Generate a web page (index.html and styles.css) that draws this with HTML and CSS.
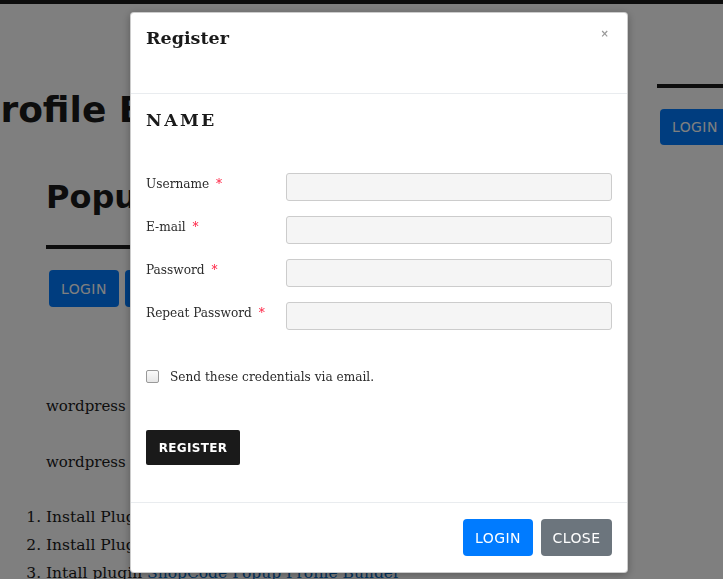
FILE: index.html
```html
<!DOCTYPE html>
<html>
<head>
<meta charset="utf-8">
<link rel="stylesheet" href="styles.css">
</head>
<body>
<div class="topbar"></div>
<div class="page">
  <main class="main">
    <h1 class="page-title">Profile Builder Popup</h1>
    <h2 class="post-title">Popup Profile Builder</h2>
    <div class="rule"></div>
    <div class="btns">
      <button class="bg-btn">LOGIN</button>
      <button class="bg-btn">REGISTER</button>
    </div>
    <p class="para">wordpress popup profile builder plugin</p>
    <p class="para">wordpress popup login register plugin</p>
    <ol class="list">
      <li>Install Plugin Profile Builder</li>
      <li>Install Plugin Bootstrap</li>
      <li>Intall plugin <a href="#">ShopCode Popup Profile Builder</a></li>
    </ol>
  </main>
  <aside class="side">
    <div class="side-rule"></div>
    <button class="bg-btn">LOGIN</button>
  </aside>
</div>

<div class="overlay"></div>

<div class="modal">
  <div class="modal-header">
    <h3 class="modal-title">Register</h3>
    <span class="close-x">×</span>
  </div>
  <div class="modal-body">
    <h4 class="section">NAME</h4>
    <div class="rows">
      <div class="row"><label>Username <span class="req">*</span></label><input type="text"></div>
      <div class="row"><label>E-mail <span class="req">*</span></label><input type="text"></div>
      <div class="row"><label>Password <span class="req">*</span></label><input type="password"></div>
      <div class="row"><label>Repeat Password <span class="req">*</span></label><input type="password"></div>
    </div>
    <div class="check"><span class="box"></span><span>Send these credentials via email.</span></div>
    <button class="register">REGISTER</button>
  </div>
  <div class="modal-footer">
    <button class="fbtn blue">LOGIN</button>
    <button class="fbtn gray">CLOSE</button>
  </div>
</div>
</body>
</html>
```
FILE: styles.css
```css
html, body {
  margin: 0;
  padding: 0;
  background: #fff;
  overflow: hidden;
  height: 579px;
}
body {
  font-family: "DejaVu Serif", "Liberation Serif", serif;
  color: #1a1a1a;
}
.topbar {
  height: 4px;
  background: #1a1a1a;
}
.page {
  display: grid;
  grid-template-columns: 611px 66px;
  padding-left: 46px;
}
.main {
  min-width: 0;
}
.page-title {
  font-family: "DejaVu Sans", sans-serif;
  font-weight: bold;
  font-size: 36px;
  line-height: 44px;
  margin: 84px 0 0 -72px;
  white-space: nowrap;
  color: #1a1a1a;
}
.post-title {
  font-family: "DejaVu Sans", sans-serif;
  font-weight: bold;
  font-size: 32px;
  line-height: 40px;
  margin: 45px 0 0 0;
  white-space: nowrap;
  color: #1a1a1a;
}
.rule {
  height: 4px;
  background: #1a1a1a;
  margin-top: 28px;
  width: 500px;
}
.btns {
  display: flex;
  gap: 6px;
  margin: 21px 0 0 3px;
}
.bg-btn {
  font-family: "DejaVu Sans", sans-serif;
  font-size: 14px;
  letter-spacing: 0.4px;
  background: #007bff;
  color: #fff;
  border: none;
  border-radius: 4px;
  height: 37px;
  padding: 0 12px;
}
.para {
  font-size: 15px;
  margin: 0;
  line-height: 20px;
  white-space: nowrap;
}
.btns + .para { margin-top: 89px; }
.para + .para { margin-top: 36px; }
.list {
  margin: 31px 0 0 0;
  padding-left: 0;
  list-style-position: outside;
  font-size: 15.5px;
  line-height: 28px;
  white-space: nowrap;
}
.list a { color: #0066bf; text-decoration: none; }
.side {
  padding-top: 80px;
}
.side-rule {
  height: 4px;
  background: #1a1a1a;
  margin-bottom: 21px;
}
.side .bg-btn {
  margin-left: 3px;
  height: 36px;
}

.overlay {
  position: fixed;
  inset: 0;
  background: rgba(0, 0, 0, 0.5);
}

.modal {
  position: fixed;
  left: 130px;
  top: 12px;
  width: 498px;
  height: 561px;
  box-sizing: border-box;
  background: #fff;
  border-radius: 4px;
  border: 1px solid rgba(0,0,0,.2);
  box-shadow: 0 2px 8px rgba(0,0,0,.3);
  display: flex;
  flex-direction: column;
}
.modal-header {
  height: 81px;
  box-sizing: border-box;
  padding: 11px 15px 0 15px;
  border-bottom: 1px solid #e9ecef;
  display: flex;
  justify-content: space-between;
  align-items: flex-start;
}
.modal-title {
  margin: 0;
  font-size: 17.5px;
  font-weight: bold;
  line-height: 28px;
  color: #1a1a1a;
}
.close-x {
  font-family: "DejaVu Sans", sans-serif;
  font-size: 10px;
  font-weight: bold;
  color: #999;
  margin: 5px 3px 0 0;
  line-height: 10px;
}
.modal-body {
  flex: 1;
  padding: 0 15px;
}
.section {
  margin: 14px 0 0 0;
  font-size: 17px;
  line-height: 24px;
  letter-spacing: 2.6px;
  font-weight: bold;
  color: #1a1a1a;
}
.rows {
  margin-top: 41px;
  display: flex;
  flex-direction: column;
  gap: 15px;
}
.row {
  display: flex;
  align-items: flex-start;
}
.row label {
  width: 140px;
  font-size: 13.5px;
  font-stretch: semi-condensed;
  line-height: 20px;
  color: #2b2b2b;
}
.req {
  color: #ff1a3c;
  margin-left: 3px;
}
.row input {
  width: 326px;
  height: 28px;
  box-sizing: border-box;
  border: 1px solid #ccc;
  border-radius: 3px;
  background: #f5f5f5;
  margin: 0;
}
.check {
  margin-top: 36px;
  display: flex;
  align-items: center;
  gap: 11px;
  font-size: 13.5px;
  font-stretch: semi-condensed;
  line-height: 20px;
  color: #2b2b2b;
}
.box {
  width: 11px;
  height: 11px;
  border: 1px solid #999;
  border-radius: 2px;
  background: linear-gradient(#fafafa, #e6e6e6);
}
.register {
  margin-top: 44px;
  font-family: "DejaVu Sans", sans-serif;
  font-weight: bold;
  font-size: 12px;
  letter-spacing: 0.3px;
  color: #fff;
  background: #1a1a1a;
  border: none;
  border-radius: 2px;
  height: 35px;
  width: 94px;
  padding: 0;
}
.modal-footer {
  height: 70px;
  box-sizing: border-box;
  border-top: 1px solid #e9ecef;
  display: flex;
  justify-content: flex-end;
  align-items: flex-start;
  gap: 8px;
  padding: 16px 15px 0 15px;
}
.fbtn {
  font-family: "DejaVu Sans", sans-serif;
  font-size: 14px;
  letter-spacing: 0.4px;
  color: #fff;
  border: none;
  border-radius: 4px;
  height: 37px;
  padding: 0;
}
.fbtn.blue { background: #007bff; width: 70px; }
.fbtn.gray { background: #6c757d; width: 71px; }
```
